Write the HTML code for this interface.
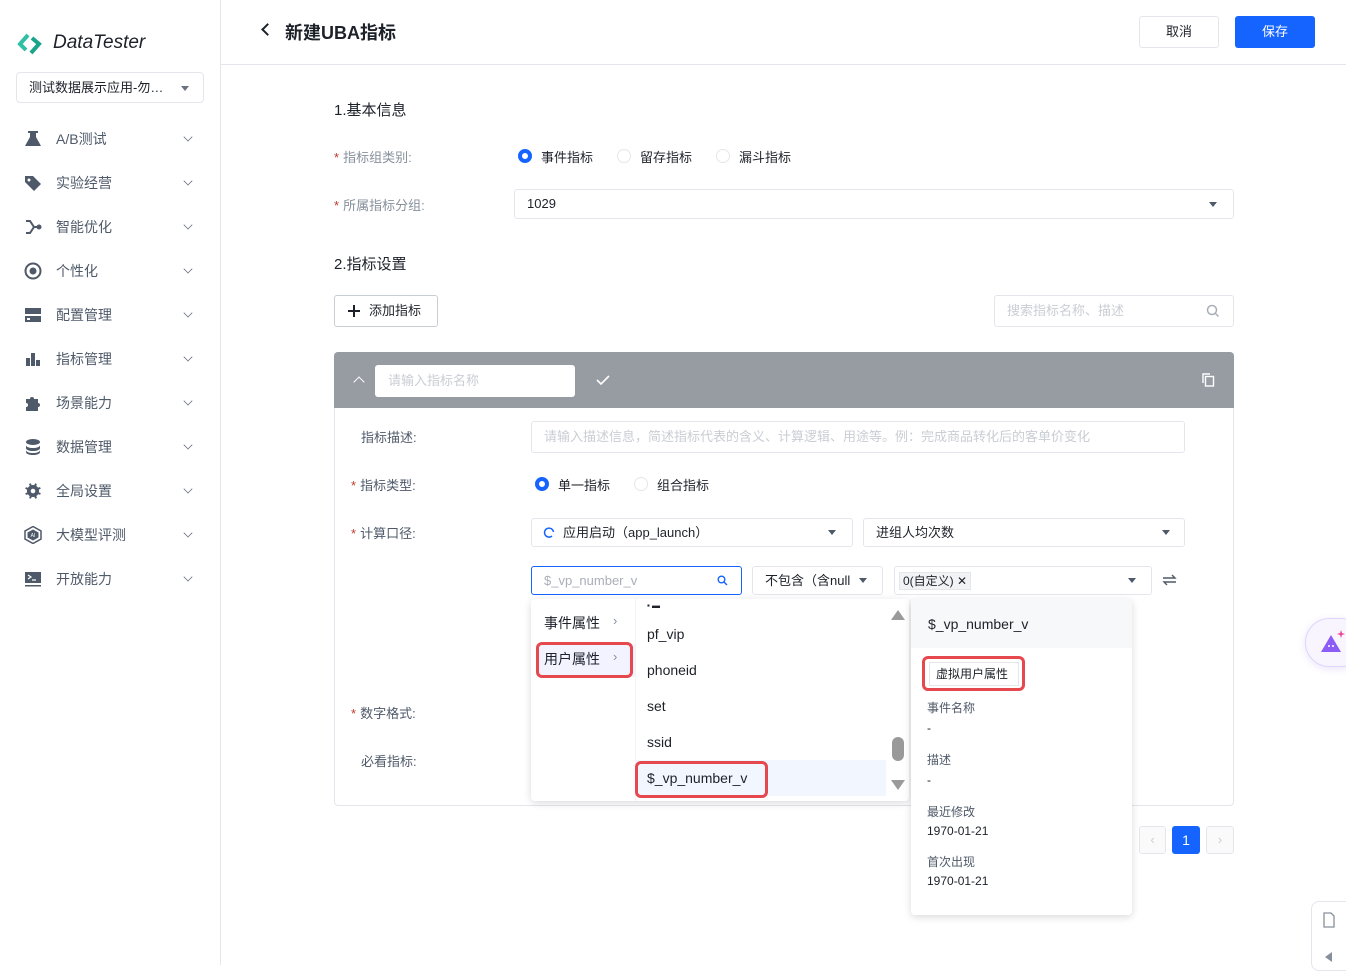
<!DOCTYPE html>
<html><head><meta charset="utf-8">
<style>
*{box-sizing:border-box;margin:0;padding:0}
body{width:1346px;height:965px;overflow:hidden;background:#fff;font-family:"Liberation Sans","Noto Sans CJK SC",sans-serif;font-size:13px;color:#1d2129;position:relative}
.a{position:absolute}
.side{left:0;top:0;width:221px;height:965px;border-right:1px solid #e5e6eb;background:#fff}
.nav{position:absolute;left:24px;width:172px;height:20px;color:#4e5969;font-size:14px}
.nav .ic{position:absolute;left:0;top:1px;width:18px;height:18px}
.nav .t{position:absolute;left:32px;top:0;line-height:20px}
.nav .ch{position:absolute;right:4px;top:4px;width:8px;height:8px;border-right:1.5px solid #6b7280;border-bottom:1.5px solid #6b7280;transform:rotate(45deg) scale(.8)}
.lbl{position:absolute;color:#86909c;font-size:13px}
.lbl b{color:#c0392b;font-weight:normal;margin-right:4px}
.inp{position:absolute;border:1px solid #e5e6eb;border-radius:3px;background:#fff;font-size:13px;line-height:28px;padding-left:12px}
.tri{position:absolute;width:0;height:0;border-left:4px solid transparent;border-right:4px solid transparent;border-top:5px solid #4e5969}
.radio{position:absolute;width:14px;height:14px;border-radius:50%;border:1px solid #e5e6eb}
.radio.on{border:4px solid #1664ff}
.red{position:absolute;border:3px solid #e5484d;border-radius:6px}
</style></head><body>
<div class="a side">
  <svg class="a" style="left:17px;top:33px" width="26" height="22" viewBox="0 0 26 22"><path d="M11 2 L3 11 L9 17" stroke="#2ebfa5" stroke-width="4" fill="none"/><path d="M15 5 L22 11 L14 20" stroke="#1aa58a" stroke-width="4" fill="none"/></svg>
  <div class="a" style="left:53px;top:32px;font-size:19px;font-style:italic;color:#1d2129;letter-spacing:0">DataTester</div>
  <div class="a" style="left:16px;top:72px;width:188px;height:31px;border:1px solid #e5e6eb;border-radius:4px;font-size:13px;line-height:30px;padding-left:12px">测试数据展示应用-勿…</div>
  <div class="tri" style="left:181px;top:86px;border-top-color:#6b7280"></div>

  <div class="nav" style="top:129px"><svg class="ic" viewBox="0 0 18 18"><path d="M4 1h10v2h-2v4l5 9H1l5-9V3H4z" fill="#4e5969"/></svg><span class="t">A/B测试</span><i class="ch"></i></div>
  <div class="nav" style="top:173px"><svg class="ic" viewBox="0 0 18 18"><path d="M1 2h8l8 8-7 7-9-9z" fill="#4e5969"/><circle cx="5" cy="6" r="1.5" fill="#fff"/></svg><span class="t">实验经营</span><i class="ch"></i></div>
  <div class="nav" style="top:217px"><svg class="ic" viewBox="0 0 18 18"><path d="M2 3h4l4 6h6M2 15h4l4-6" stroke="#4e5969" stroke-width="2" fill="none"/><circle cx="15" cy="9" r="2.5" fill="#4e5969"/></svg><span class="t">智能优化</span><i class="ch"></i></div>
  <div class="nav" style="top:261px"><svg class="ic" viewBox="0 0 18 18"><circle cx="9" cy="9" r="7.5" stroke="#4e5969" stroke-width="2" fill="none"/><circle cx="9" cy="9" r="3.5" fill="#4e5969"/></svg><span class="t">个性化</span><i class="ch"></i></div>
  <div class="nav" style="top:305px"><svg class="ic" viewBox="0 0 18 18"><rect x="1" y="2" width="16" height="6" fill="#4e5969"/><rect x="1" y="10" width="16" height="6" fill="#4e5969"/><rect x="3" y="12" width="3" height="2" fill="#fff"/></svg><span class="t">配置管理</span><i class="ch"></i></div>
  <div class="nav" style="top:349px"><svg class="ic" viewBox="0 0 18 18"><rect x="2" y="8" width="4" height="8" fill="#4e5969"/><rect x="7" y="3" width="4" height="13" fill="#4e5969"/><rect x="12" y="10" width="4" height="6" fill="#4e5969"/></svg><span class="t">指标管理</span><i class="ch"></i></div>
  <div class="nav" style="top:393px"><svg class="ic" viewBox="0 0 18 18"><path d="M2 5h4a2 2 0 1 1 4 0h4v4a2 2 0 1 1 0 4v4H2v-4a2 2 0 1 0 0-4z" fill="#4e5969"/></svg><span class="t">场景能力</span><i class="ch"></i></div>
  <div class="nav" style="top:437px"><svg class="ic" viewBox="0 0 18 18"><ellipse cx="9" cy="4" rx="7" ry="3" fill="#4e5969"/><path d="M2 7c0 4 14 4 14 0v3c0 4-14 4-14 0zM2 12c0 4 14 4 14 0v2c0 4-14 4-14 0z" fill="#4e5969"/></svg><span class="t">数据管理</span><i class="ch"></i></div>
  <div class="nav" style="top:481px"><svg class="ic" viewBox="0 0 18 18"><circle cx="9" cy="9" r="6" fill="#4e5969"/><path d="M8 1h2v16H8zM1 8h16v2H1z" fill="#4e5969" transform="rotate(22 9 9)"/><path d="M8 1h2v16H8zM1 8h16v2H1z" fill="#4e5969" transform="rotate(67 9 9)"/><circle cx="9" cy="9" r="2.3" fill="#fff"/></svg><span class="t">全局设置</span><i class="ch"></i></div>
  <div class="nav" style="top:525px"><svg class="ic" viewBox="0 0 18 18"><path d="M9 .5l8 4.5v8l-8 4.5-8-4.5v-8z" stroke="#4e5969" stroke-width="1.5" fill="none"/><path d="M9 3.5l5.5 3v5L9 14.5 3.5 11.5v-5z" fill="#4e5969"/><text x="9" y="11" font-size="5" fill="#fff" text-anchor="middle">AI</text></svg><span class="t">大模型评测</span><i class="ch"></i></div>
  <div class="nav" style="top:569px"><svg class="ic" viewBox="0 0 18 18"><rect x="1" y="2" width="16" height="11" fill="#4e5969"/><path d="M4 5l3 2-3 2M8 10h4" stroke="#fff" stroke-width="1.2" fill="none"/><rect x="1" y="15" width="16" height="1.5" fill="#4e5969"/></svg><span class="t">开放能力</span><i class="ch"></i></div>
</div>

<!-- header -->
<div class="a" style="left:221px;top:64px;width:1125px;height:1px;background:#e5e6eb"></div>
<div class="a" style="left:263px;top:25px;width:9px;height:9px;border-left:2px solid #1d2129;border-bottom:2px solid #1d2129;transform:rotate(45deg)"></div>
<div class="a" style="left:285px;top:19px;font-size:18px;font-weight:bold">新建UBA指标</div>
<div class="a" style="left:1139px;top:16px;width:80px;height:32px;border:1px solid #e5e6eb;border-radius:3px;text-align:center;line-height:30px">取消</div>
<div class="a" style="left:1235px;top:16px;width:80px;height:32px;background:#1664ff;border-radius:3px;text-align:center;line-height:32px;color:#fff">保存</div>

<div class="a" style="left:334px;top:99px;font-size:15px">1.基本信息</div>
<div class="lbl" style="left:334px;top:147px"><b>*</b>指标组类别:</div>
<div class="radio on" style="left:518px;top:149px"></div><div class="a" style="left:541px;top:147px">事件指标</div>
<div class="radio" style="left:617px;top:149px"></div><div class="a" style="left:640px;top:147px">留存指标</div>
<div class="radio" style="left:716px;top:149px"></div><div class="a" style="left:739px;top:147px">漏斗指标</div>
<div class="lbl" style="left:334px;top:195px"><b>*</b>所属指标分组:</div>
<div class="inp" style="left:514px;top:189px;width:720px;height:30px;color:#1d2129">1029</div>
<div class="tri" style="left:1209px;top:202px"></div>

<div class="a" style="left:334px;top:253px;font-size:15px">2.指标设置</div>
<div class="a" style="left:334px;top:295px;width:104px;height:32px;border:1px solid #c9cdd4;border-radius:3px;line-height:30px;padding-left:34px">添加指标</div>
<div class="a" style="left:348px;top:310px;width:12px;height:1.5px;background:#1d2129"></div><div class="a" style="left:353px;top:305px;width:1.5px;height:12px;background:#1d2129"></div>
<div class="inp" style="left:994px;top:295px;width:240px;height:32px;line-height:30px;color:#c9cdd4">搜索指标名称、描述</div>
<svg class="a" style="left:1206px;top:304px" width="14" height="14" viewBox="0 0 14 14"><circle cx="6" cy="6" r="4.5" stroke="#a9aeb8" stroke-width="1.5" fill="none"/><path d="M9.5 9.5l3 3" stroke="#a9aeb8" stroke-width="1.5"/></svg>

<!-- card -->
<div class="a" style="left:334px;top:352px;width:900px;height:454px;border:1px solid #e5e6eb;border-radius:4px"></div>
<div class="a" style="left:334px;top:352px;width:900px;height:56px;background:#979ca3;border-radius:4px 4px 0 0"></div>
<div class="a" style="left:355px;top:378px;width:8px;height:8px;border-left:1.8px solid #fff;border-top:1.8px solid #fff;transform:rotate(45deg)"></div>
<div class="a" style="left:375px;top:365px;width:200px;height:32px;background:#fff;border-radius:3px;color:#c9cdd4;line-height:32px;padding-left:13px">请输入指标名称</div>
<svg class="a" style="left:596px;top:374px" width="14" height="12"><path d="M1 6l4 4 8-8" stroke="#fff" stroke-width="1.6" fill="none"/></svg>
<svg class="a" style="left:1202px;top:373px" width="13" height="14"><rect x="3.5" y="3.5" width="8" height="9.5" stroke="#fff" stroke-width="1.4" fill="none"/><path d="M1 10V1h7" stroke="#fff" stroke-width="1.4" fill="none"/></svg>

<div class="lbl" style="left:361px;top:427px;color:#4e5969">指标描述:</div>
<div class="inp" style="left:531px;top:421px;width:654px;height:32px;line-height:30px;color:#c9cdd4">请输入描述信息，简述指标代表的含义、计算逻辑、用途等。例：完成商品转化后的客单价变化</div>
<div class="lbl" style="left:351px;top:475px;color:#4e5969"><b>*</b>指标类型:</div>
<div class="radio on" style="left:535px;top:477px"></div><div class="a" style="left:558px;top:475px">单一指标</div>
<div class="radio" style="left:634px;top:477px"></div><div class="a" style="left:657px;top:475px">组合指标</div>
<div class="lbl" style="left:351px;top:523px;color:#4e5969"><b>*</b>计算口径:</div>
<div class="inp" style="left:531px;top:518px;width:322px;height:29px;padding-left:31px">应用启动（app_launch）</div>
<svg class="a" style="left:543px;top:526px" width="12" height="12"><path d="M9 10A4.5 4.5 0 1 1 10.5 6" stroke="#1664ff" stroke-width="1.5" fill="none"/></svg>
<div class="tri" style="left:828px;top:530px"></div>
<div class="inp" style="left:863px;top:518px;width:322px;height:29px">进组人均次数</div>
<div class="tri" style="left:1162px;top:530px"></div>

<div class="inp" style="left:531px;top:566px;width:211px;height:29px;border-color:#1664ff;color:#a9aeb8">$_vp_number_v</div>
<svg class="a" style="left:717px;top:575px" width="11" height="11"><circle cx="4.5" cy="4.5" r="3.3" stroke="#1664ff" stroke-width="1.4" fill="none"/><path d="M7 7l3 3" stroke="#1664ff" stroke-width="1.4"/></svg>
<div class="inp" style="left:752px;top:566px;width:131px;height:29px">不包含（含null</div>
<div class="tri" style="left:859px;top:578px"></div>
<div class="inp" style="left:894px;top:566px;width:258px;height:29px;padding-left:4px"><span style="background:#f2f3f5;border:1px solid #e5e6eb;font-size:12px;padding:1px 3px;line-height:18px">0(自定义) ✕</span></div>
<div class="tri" style="left:1128px;top:578px"></div>
<svg class="a" style="left:1162px;top:573px" width="15" height="14"><path d="M1 5h12l-3-3M14 9H2l3 3" stroke="#4e5969" stroke-width="1.4" fill="none"/></svg>

<div class="lbl" style="left:351px;top:703px;color:#4e5969"><b>*</b>数字格式:</div>
<div class="lbl" style="left:361px;top:751px;color:#4e5969">必看指标:</div>

<!-- pagination -->
<div class="a" style="left:1139px;top:826px;width:27px;height:28px;border:1px solid #e5e6eb;border-radius:3px;background:#fafafa;color:#c9cdd4;text-align:center;line-height:26px">‹</div>
<div class="a" style="left:1172px;top:826px;width:28px;height:28px;background:#1664ff;border-radius:3px;color:#fff;text-align:center;line-height:28px;font-size:14px">1</div>
<div class="a" style="left:1206px;top:826px;width:28px;height:28px;border:1px solid #e5e6eb;border-radius:3px;background:#fafafa;color:#c9cdd4;text-align:center;line-height:26px">›</div>

<!-- dropdown -->
<div class="a" style="left:531px;top:599px;width:378px;height:202px;background:#fff;border-radius:4px;box-shadow:0 2px 8px rgba(0,0,0,.15)"></div>
<div class="a" style="left:635px;top:599px;width:1px;height:202px;background:#f2f3f5"></div>
<div class="a" style="left:544px;top:613px;font-size:14px">事件属性</div><div class="a" style="left:613px;top:613px;color:#86909c">›</div>
<div class="a" style="left:536px;top:644px;width:99px;height:33px;background:#f2f3ff"></div>
<div class="a" style="left:544px;top:649px;font-size:14px">用户属性</div><div class="a" style="left:613px;top:649px;color:#86909c">›</div>
<div class="red" style="left:536px;top:642px;width:97px;height:36px"></div>
<div class="a" style="left:647px;top:601px;font-size:8px">▪ ▬</div>
<div class="a" style="left:647px;top:626px;font-size:14px">pf_vip</div>
<div class="a" style="left:647px;top:662px;font-size:14px">phoneid</div>
<div class="a" style="left:647px;top:698px;font-size:14px">set</div>
<div class="a" style="left:647px;top:734px;font-size:14px">ssid</div>
<div class="a" style="left:636px;top:760px;width:250px;height:36px;background:#f2f6ff"></div>
<div class="a" style="left:647px;top:770px;font-size:14px">$_vp_number_v</div>
<div class="red" style="left:635px;top:761px;width:133px;height:37px"></div>
<div class="a" style="left:891px;top:610px;width:0;height:0;border-left:7px solid transparent;border-right:7px solid transparent;border-bottom:10px solid #9a9a9a"></div>
<div class="a" style="left:892px;top:737px;width:12px;height:24px;background:#999;border-radius:6px"></div>
<div class="a" style="left:891px;top:780px;width:0;height:0;border-left:7px solid transparent;border-right:7px solid transparent;border-top:10px solid #9a9a9a"></div>

<!-- detail panel -->
<div class="a" style="left:911px;top:599px;width:221px;height:316px;background:#fff;border-radius:4px;box-shadow:0 2px 8px rgba(0,0,0,.15)"></div>
<div class="a" style="left:911px;top:599px;width:221px;height:49px;background:#f7f8fa;border-radius:4px 4px 0 0"></div>
<div class="a" style="left:928px;top:616px;font-size:14px">$_vp_number_v</div>
<div class="a" style="left:929px;top:662px;width:90px;height:24px;border:1px solid #e5e6eb;font-size:12px;line-height:22px;padding-left:6px">虚拟用户属性</div>
<div class="red" style="left:922px;top:656px;width:103px;height:35px"></div>
<div class="a" style="left:927px;top:699px;font-size:12px;color:#4e5969">事件名称</div>
<div class="a" style="left:927px;top:721px;font-size:12px">-</div>
<div class="a" style="left:927px;top:751px;font-size:12px;color:#4e5969">描述</div>
<div class="a" style="left:927px;top:773px;font-size:12px">-</div>
<div class="a" style="left:927px;top:803px;font-size:12px;color:#4e5969">最近修改</div>
<div class="a" style="left:927px;top:824px;font-size:12px">1970-01-21</div>
<div class="a" style="left:927px;top:853px;font-size:12px;color:#4e5969">首次出现</div>
<div class="a" style="left:927px;top:874px;font-size:12px">1970-01-21</div>

<!-- floating -->
<div class="a" style="left:1305px;top:618px;width:60px;height:49px;border:1px solid #ddd6fe;border-radius:25px;background:#f8f5ff;box-shadow:0 2px 8px rgba(120,80,220,.15)"></div>
<svg class="a" style="left:1318px;top:628px" width="28" height="28" viewBox="0 0 28 28"><path d="M3 24L13 7l10 17z" fill="#8b5cf6"/><circle cx="11" cy="18" r="1" fill="#fff"/><circle cx="15" cy="18" r="1" fill="#fff"/><path d="M23 2l1 3 3 1-3 1-1 3-1-3-3-1 3-1z" fill="#ec4899"/></svg>
<div class="a" style="left:1311px;top:901px;width:50px;height:70px;border:1px solid #e5e6eb;border-radius:8px;background:#fff"></div>
<svg class="a" style="left:1322px;top:912px" width="14" height="16"><path d="M2 1h7l3 3v11H2z" stroke="#86909c" stroke-width="1.3" fill="none"/></svg>
<div class="a" style="left:1325px;top:952px;width:0;height:0;border-top:5px solid transparent;border-bottom:5px solid transparent;border-right:7px solid #86909c"></div>
</body></html>
